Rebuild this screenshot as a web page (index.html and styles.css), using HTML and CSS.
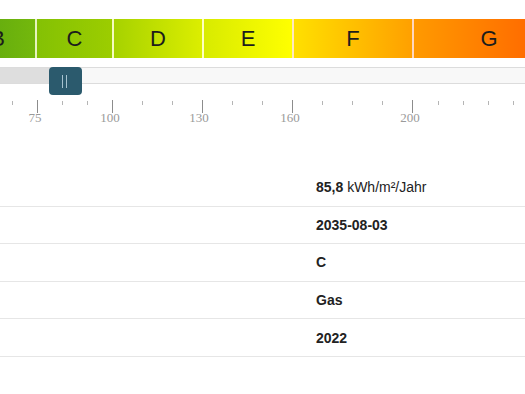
FILE: index.html
```html
<!DOCTYPE html>
<html lang="de">

<head>
  <meta charset="UTF-8">
  <meta name="viewport" content="width=device-width, initial-scale=1.0">
  <title>Energieausweis</title>
  <link rel="stylesheet" href="styles.css">
</head>

<body>
  <div class="energy">
    <div class="bar">
      <div class="seg seg-b">B</div>
      <div class="seg seg-c">C</div>
      <div class="seg seg-d">D</div>
      <div class="seg seg-e">E</div>
      <div class="seg seg-f">F</div>
      <div class="seg seg-g">G</div>
    </div>
    <div class="slider">
      <div class="track"><div class="fill"></div></div>
      <div class="handle"><span></span></div>
    </div>
    <div class="ticks">
      <i class="tick" style="left:52px"></i>
      <i class="tick big" style="left:77px"></i>
      <i class="tick" style="left:102px"></i>
      <i class="tick" style="left:127px"></i>
      <i class="tick big" style="left:152px"></i>
      <i class="tick" style="left:182px"></i>
      <i class="tick" style="left:212px"></i>
      <i class="tick big" style="left:242px"></i>
      <i class="tick" style="left:272px"></i>
      <i class="tick" style="left:302px"></i>
      <i class="tick big" style="left:332px"></i>
      <i class="tick" style="left:362px"></i>
      <i class="tick" style="left:392px"></i>
      <i class="tick" style="left:422px"></i>
      <i class="tick big" style="left:452px"></i>
      <i class="tick" style="left:478px"></i>
      <i class="tick" style="left:503px"></i>
      <i class="tick" style="left:528px"></i>
      <i class="tick" style="left:553px"></i>
      <span class="lbl" style="left:75px">75</span>
      <span class="lbl" style="left:150px">100</span>
      <span class="lbl" style="left:239px">130</span>
      <span class="lbl" style="left:330px">160</span>
      <span class="lbl" style="left:450px">200</span>
    </div>
  </div>

  <div class="facts">
    <div class="row"><div class="key"></div><div class="val"><b>85,8</b> kWh/m²/Jahr</div></div>
    <div class="row"><div class="key"></div><div class="val"><b>2035-08-03</b></div></div>
    <div class="row"><div class="key"></div><div class="val"><b>C</b></div></div>
    <div class="row"><div class="key"></div><div class="val"><b>Gas</b></div></div>
    <div class="row"><div class="key"></div><div class="val"><b>2022</b></div></div>
  </div>
</body>

</html>
```

FILE: styles.css
```css
* {
  margin: 0;
  padding: 0;
  box-sizing: border-box;
}

body {
  background: #fff;
  overflow: hidden;
  font-family: "Liberation Sans", Arial, sans-serif;
  color: #222;
}

/* skala ist breiter als das fenster */
.energy {
  width: 604px;
  margin-left: -40px;
  padding-top: 19px;
}

.bar {
  display: flex;
  height: 39px;
}

.seg {
  display: flex;
  align-items: center;
  justify-content: center;
  font-size: 22px;
  color: #1c1c1c;
  border-left: 2px solid rgba(255, 255, 255, .75);
}

.seg-b { width: 75px; border-left: none; background: linear-gradient(to right, #5aa510, #74b80c); }
.seg-c { width: 77px; background: linear-gradient(to right, #84c104, #9ccd00); }
.seg-d { width: 90px; background: linear-gradient(to right, #a6d200, #dcee00); }
.seg-e { width: 90px; background: linear-gradient(to right, #d8eb00, #ffff00); }
.seg-f { width: 120px; background: linear-gradient(to right, #ffe000, #ffa000); }
.seg-g { width: 152px; background: linear-gradient(to right, #ff9a00, #ff5e00); }

.slider {
  position: relative;
  height: 28px;
  margin-top: 9px;
}

.track {
  margin-top: 7px;
  height: 17px;
  background: #f8f8f8;
  border-top: 1px solid #dcdcdc;
  border-bottom: 1px solid #dcdcdc;
}

.fill {
  width: 105px;
  height: 100%;
  background: #dedede;
}

.handle {
  position: absolute;
  top: 0;
  left: 89px;
  width: 33px;
  height: 28px;
  border-radius: 4px;
  background: #2b5a6d;
  display: flex;
  align-items: center;
  justify-content: center;
}

.handle span {
  width: 5px;
  height: 13px;
  border-left: 1px solid #a6c2cf;
  border-right: 1px solid #a6c2cf;
  margin-left: -3px;
}

.ticks {
  position: relative;
  height: 30px;
}

.tick {
  position: absolute;
  top: 6px;
  width: 1px;
  height: 4px;
  background: #b5b5b5;
}

.tick.big {
  top: 5px;
  height: 13px;
  background: #8c8c8c;
}

.lbl {
  position: absolute;
  top: 16px;
  transform: translateX(-50%);
  font-family: "Liberation Serif", "Times New Roman", serif;
  font-size: 13px;
  line-height: 13px;
  color: #9a9a9a;
}

.facts {
  margin-top: 44px;
}

.row {
  display: flex;
  height: 37.6px;
  align-items: center;
  border-bottom: 1px solid #e6e6e6;
  font-size: 14px;
}

.key {
  width: 316px;
}

.val b {
  font-weight: bold;
}
```
